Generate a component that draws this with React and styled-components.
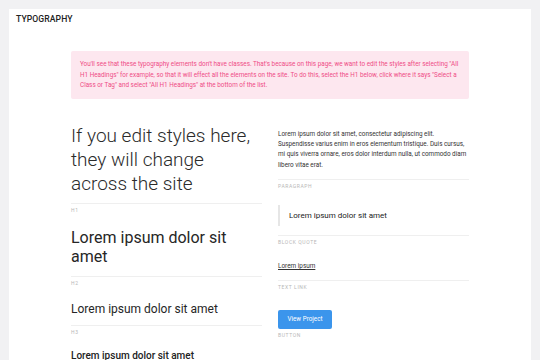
import React from "react";
import styled, { createGlobalStyle } from "styled-components";

const Global = createGlobalStyle`
  html, body { margin: 0; padding: 0; background: #f1f1f3; }
  body { font-family: Roboto, "Liberation Sans", Arial, sans-serif; color: #2b2b2b; }
  * { box-sizing: border-box; }
`;

const Page = styled.div`
  padding: 9px 9px 0;
  min-height: 360px;
`;

const Card = styled.div`
  background: #fff;
  min-height: 360px;
  padding: 5px 7px 0;
`;

const Title = styled.h1`
  margin: 0;
  font-size: 8.6px;
  line-height: 11px;
  font-weight: 500;
  color: #222;
  letter-spacing: 0.1px;
`;

const Content = styled.div`
  width: 398px;
  margin: 26px auto 0;
`;

const Notice = styled.div`
  background: #fde7ef;
  border-radius: 2px;
  color: #ef4d86;
  font-size: 6.35px;
  line-height: 10.5px;
  padding: 8px 9px 8px 9px;
`;

const Columns = styled.div`
  display: grid;
  grid-template-columns: 191px 191px;
  column-gap: 16px;
  margin-top: 25px;
`;

const Column = styled.div`
  display: flex;
  flex-direction: column;
`;

const Specimen = styled.div`
  margin-bottom: ${(p) => p.$after || 0}px;
`;

const Rule = styled.div`
  margin-top: ${(p) => p.$gap}px;
  border-top: 1px solid #efefef;
`;

const Label = styled.div`
  margin-top: 3px;
  font-size: 5px;
  line-height: 6px;
  letter-spacing: 0.6px;
  color: #b8b8b8;
  text-transform: uppercase;
`;

const H1 = styled.h1`
  margin: 0;
  font-size: 19px;
  line-height: 24px;
  font-weight: 300;
  color: #2b2b2b;
`;

const H2 = styled.h2`
  margin: 0;
  font-size: 16px;
  line-height: 19px;
  font-weight: 400;
  color: #262626;
`;

const H3 = styled.h3`
  margin: 0;
  font-size: 12px;
  line-height: 15px;
  font-weight: 400;
  color: #262626;
`;

const H4 = styled.h4`
  margin: 0;
  font-size: 10px;
  line-height: 12px;
  font-weight: 500;
  color: #222;
`;

const Paragraph = styled.p`
  margin: 5px 0 0;
  font-size: 6.35px;
  line-height: 10.4px;
  color: #333;
`;

const Quote = styled.blockquote`
  margin: 0;
  border-left: 2px solid #e6e6e6;
  padding: 5px 0 5px 9px;
  font-size: 8px;
  line-height: 11px;
  color: #222;
`;

const TextLink = styled.a`
  display: block;
  font-size: 6.4px;
  line-height: 10px;
  color: #333;
  text-decoration: underline;
`;

const Button = styled.a`
  display: inline-flex;
  align-items: center;
  justify-content: center;
  width: 54px;
  height: 19px;
  border-radius: 2px;
  background: #3b95ec;
  color: #fff;
  font-size: 6.3px;
  text-decoration: none;
`;

export default function App() {
  return (
    <>
      <Global />
      <Page>
        <Card>
          <Title>TYPOGRAPHY</Title>
          <Content>
            <Notice>
              You'll see that these typography elements don't have classes. That's because on this page, we want to
              edit the styles after selecting "All H1 Headings" for example, so that it will effect all the elements on
              the site. To do this, select the H1 below, click where it says "Select a Class or Tag" and select "All H1
              Headings" at the bottom of the list.
            </Notice>
            <Columns>
              <Column>
                <Specimen $after={15}>
                  <H1>If you edit styles here, they will change across the site</H1>
                  <Rule $gap={7} />
                  <Label>H1</Label>
                </Specimen>
                <Specimen $after={16}>
                  <H2>Lorem ipsum dolor sit amet</H2>
                  <Rule $gap={10} />
                  <Label>H2</Label>
                </Specimen>
                <Specimen $after={15}>
                  <H3>Lorem ipsum dolor sit amet</H3>
                  <Rule $gap={8} />
                  <Label>H3</Label>
                </Specimen>
                <Specimen>
                  <H4>Lorem ipsum dolor sit amet</H4>
                </Specimen>
              </Column>
              <Column>
                <Specimen $after={16}>
                  <Paragraph>
                    Lorem ipsum dolor sit amet, consectetur adipiscing elit. Suspendisse varius enim in eros elementum
                    tristique. Duis cursus, mi quis viverra ornare, eros dolor interdum nulla, ut commodo diam libero
                    vitae erat.
                  </Paragraph>
                  <Rule $gap={9} />
                  <Label>Paragraph</Label>
                </Specimen>
                <Specimen $after={16}>
                  <Quote>Lorem ipsum dolor sit amet</Quote>
                  <Rule $gap={9} />
                  <Label>Block Quote</Label>
                </Specimen>
                <Specimen $after={16}>
                  <TextLink href="#">Lorem ipsum</TextLink>
                  <Rule $gap={9} />
                  <Label>Text Link</Label>
                </Specimen>
                <Specimen>
                  <Button href="#">View Project</Button>
                  <Label>Button</Label>
                </Specimen>
              </Column>
            </Columns>
          </Content>
        </Card>
      </Page>
    </>
  );
}
